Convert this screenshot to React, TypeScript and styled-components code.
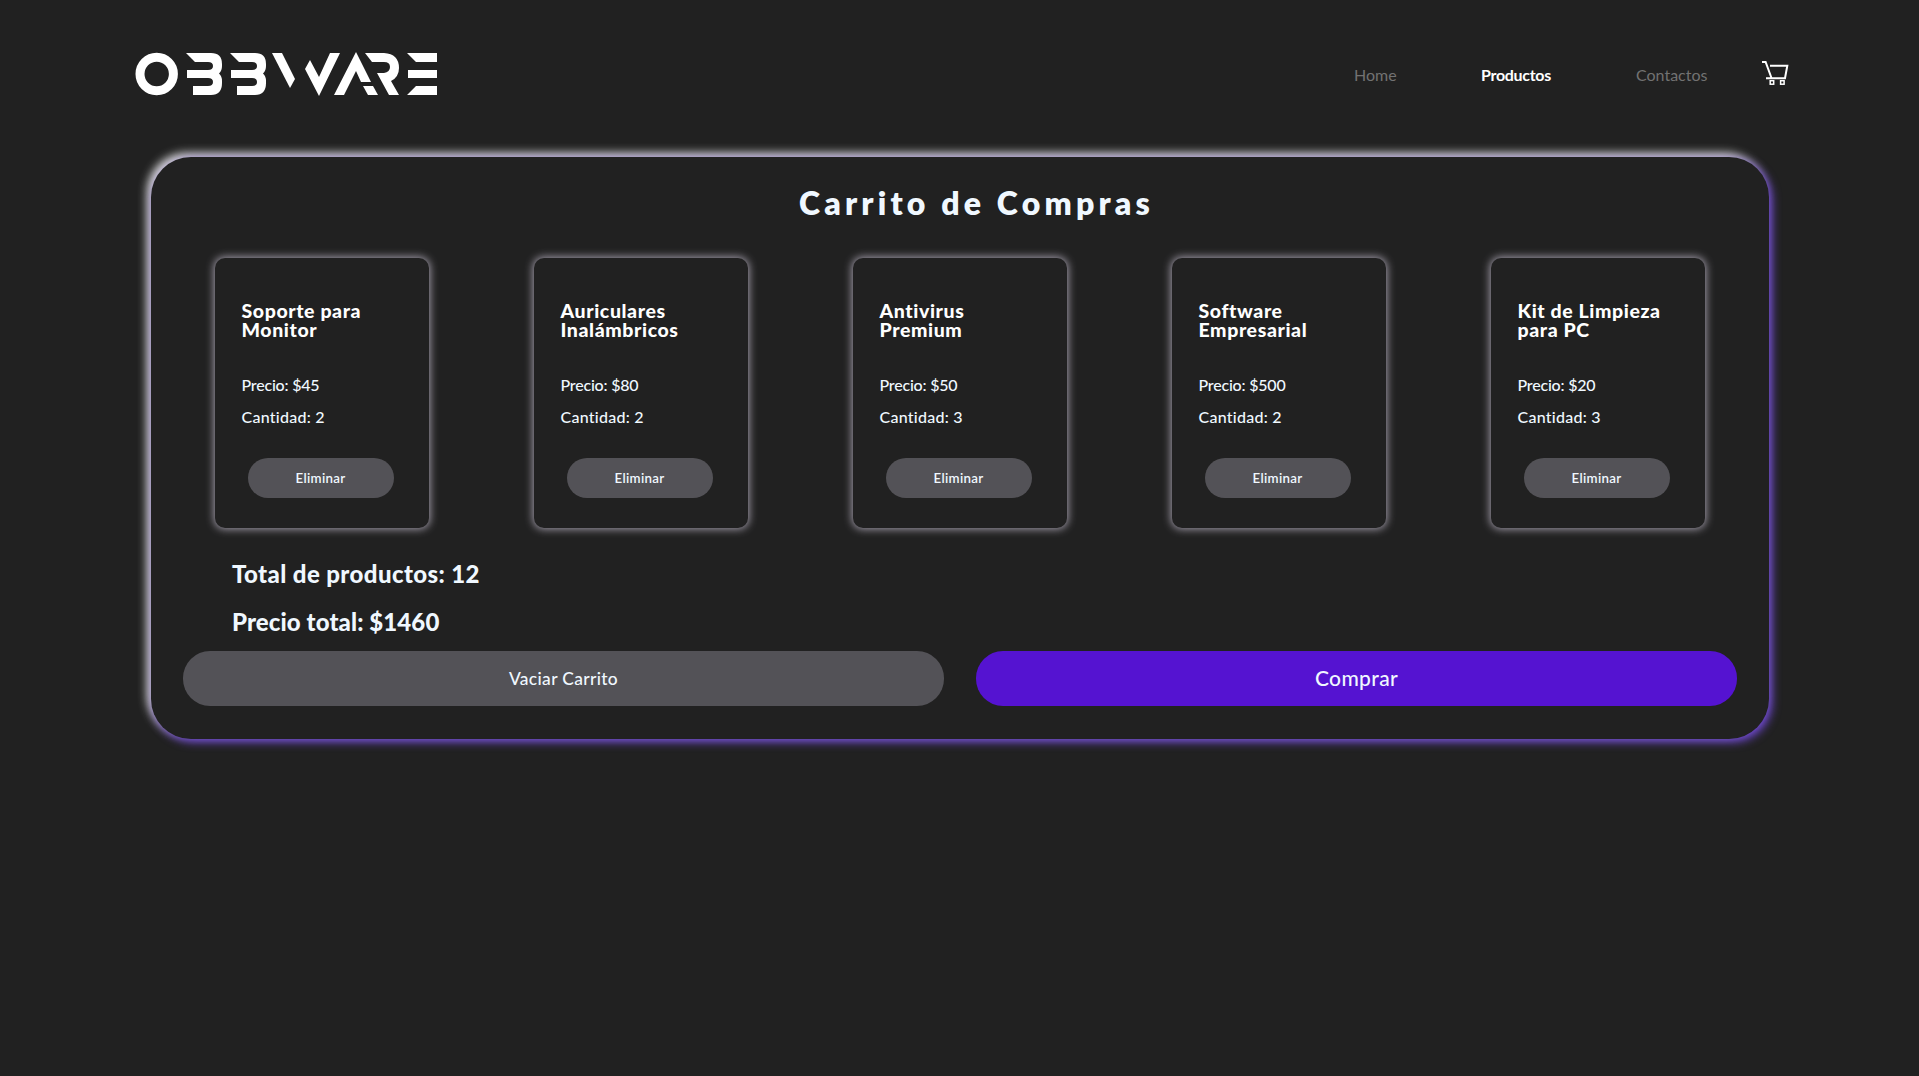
import React from "react";
import styled, { createGlobalStyle } from "styled-components";

const Global = createGlobalStyle`
  * { box-sizing: border-box; }
  body { margin: 0; background: #212121; font-family: Lato, "Open Sans", sans-serif; color: aliceblue; }
  h1, h2, h3, p { margin: 0; }
`;

const Page = styled.div`
  min-height: 1076px;
  background: #212121;
  display: flex;
  flex-direction: column;
`;
const Header = styled.header`
  height: 157px;
  flex: none;
  display: flex;
  align-items: flex-start;
  justify-content: space-between;
  padding: 52px 129px 0 135px;
`;
const Logo = styled.svg`
  display: block;
  width: 303px;
  height: 44px;
  fill: #fff;
`;
const Nav = styled.nav`
  display: flex;
  align-items: flex-start;
`;
const NavLink = styled.a<{ $active?: boolean; $w: number; $gap: number }>`
  width: ${(p) => p.$w}px;
  margin-right: ${(p) => p.$gap}px;
  padding-top: 13px;
  font-size: 16px;
  line-height: 20px;
  white-space: nowrap;
  letter-spacing: ${(p) => (p.$active ? -0.3 : 0)}px;
  font-weight: ${(p) => (p.$active ? 700 : 400)};
  color: ${(p) => (p.$active ? "#fff" : "#727272")};
`;
const CartIcon = styled.svg`
  display: block;
  width: 28px;
  height: 26px;
  margin-top: 8px;
`;
const Panel = styled.main`
  width: 1618px;
  height: 582px;
  margin-left: 151px;
  padding: 29px 32px 33px;
  border-radius: 40px;
  background: #212121;
  box-shadow: 3px 3px 10px #6e46d4, -4px -4px 10px #e4e4e4;
  display: flex;
  flex-direction: column;
`;
const Title = styled.h1`
  padding-left: 33px;
  text-align: center;
  font-size: 32px;
  line-height: 34px;
  font-weight: 800;
  letter-spacing: 4.2px;
`;
const Cards = styled.section`
  display: grid;
  grid-template-columns: repeat(5, 214px);
  column-gap: 105px;
  padding: 38px 0 0 32px;
`;
const Card = styled.article`
  height: 270px;
  padding: 43px 26px 0 26.5px;
  border-radius: 10px;
  box-shadow: 0 0 8px 1px #a6a0ae;
`;
const CardTitle = styled.h3`
  height: 74px;
  color: #fff;
  font-size: 19.5px;
  line-height: 19px;
  letter-spacing: 0.6px;
  font-weight: 900;
  white-space: pre;
`;
const Detail = styled.p<{ $ls: number }>`
  font-size: 16px;
  line-height: 20px;
  margin-bottom: 12px;
  font-weight: 500;
  letter-spacing: ${(p) => p.$ls}px;
`;
const Button = styled.button<{ $primary?: boolean }>`
  border: 0;
  height: 55px;
  padding: 0 0 ${(p) => (p.$primary ? 2 : 0)}px;
  border-radius: 27px;
  background: ${(p) => (p.$primary ? "#5513d1" : "#535257")};
  color: aliceblue;
  font-family: inherit;
  font-size: ${(p) => (p.$primary ? 21 : 17.4)}px;
  letter-spacing: 0.35px;
  font-weight: 500;
`;
const RemoveButton = styled(Button)`
  display: block;
  width: 146px;
  height: 40px;
  margin: 31px 0 0 6px;
  border-radius: 20px;
  font-size: 13.3px;
  letter-spacing: 0.3px;
  font-weight: 600;
`;
const Totals = styled.section`
  padding: 31px 0 0 49px;
  height: 123px;
`;
const Total = styled.h2<{ $ls: number }>`
  font-size: 24px;
  line-height: 30px;
  margin-bottom: 18px;
  font-weight: 900;
  letter-spacing: ${(p) => p.$ls}px;
`;
const Actions = styled.div`
  display: grid;
  grid-template-columns: 1fr 1fr;
  gap: 32px;
`;

const items = [
  { name: "Soporte para\nMonitor", price: 45, qty: 2 },
  { name: "Auriculares\nInalámbricos", price: 80, qty: 2 },
  { name: "Antivirus\nPremium", price: 50, qty: 3 },
  { name: "Software\nEmpresarial", price: 500, qty: 2 },
  { name: "Kit de Limpieza\npara PC", price: 20, qty: 3 },
];

const LETTER_B =
  "M51 1H76Q87 1 87 12V14Q87 19 84 21.5Q87 24 87 29V31Q87 43 76 43H58V34H73Q78 34 78 30Q78 26 73 26H52V18H73Q78 18 78 14Q78 10 73 10H60Z";

const LogoMark = () => (
  <Logo viewBox="0 0 303 44" role="img" aria-label="Obbware">
    <circle cx="21.7" cy="22" r="16.7" fill="none" stroke="#fff" strokeWidth="9" />
    <path d={LETTER_B} />
    <path transform="translate(44 0)" d={LETTER_B} />
    <path d="M137 1H147L160 27L155 36Z" />
    <path d="M175 8L184 25L195 1H205L184 44L170 17Z" />
    <path d="M221 0L236 30H226L221 19L209 43H199Z" />
    <path d="M228 34H238L243 43H233Z" />
    <path d="M230 1H249Q264 2 264 16Q264 25 256 29L264 43H254L242 21H249Q255 20 255 15Q255 10 249 10H237Z" />
    <path d="M272 1H302V10H281ZM273 18H302V26H273ZM281 34H302V43H272Z" />
  </Logo>
);

export default function App() {
  return (
    <Page>
      <Global />
      <Header>
        <LogoMark />
        <Nav>
          <NavLink $w={43} $gap={84}>Home</NavLink>
          <NavLink $w={71} $gap={84} $active>Productos</NavLink>
          <NavLink $w={72} $gap={54}>Contactos</NavLink>
          <CartIcon viewBox="0 0 28 26" fill="none" stroke="#fff" strokeWidth="2">
            <path d="M0 2H3.6L9.5 18M8 5.8H25.3L23 18.3H4" />
            <g strokeWidth="1.5">
              <rect x="8.2" y="20.7" width="3.5" height="3.5" />
              <rect x="18.6" y="20.7" width="3.5" height="3.5" />
            </g>
          </CartIcon>
        </Nav>
      </Header>
      <Panel>
        <Title>Carrito de Compras</Title>
        <Cards>
          {items.map((item) => (
            <Card key={item.name}>
              <CardTitle>{item.name}</CardTitle>
              <Detail $ls={-0.2}>Precio: ${item.price}</Detail>
              <Detail $ls={0.25}>Cantidad: {item.qty}</Detail>
              <RemoveButton>Eliminar</RemoveButton>
            </Card>
          ))}
        </Cards>
        <Totals>
          <Total $ls={0.4}>Total de productos: 12</Total>
          <Total $ls={0.1}>Precio total: $1460</Total>
        </Totals>
        <Actions>
          <Button>Vaciar Carrito</Button>
          <Button $primary>Comprar</Button>
        </Actions>
      </Panel>
    </Page>
  );
}
